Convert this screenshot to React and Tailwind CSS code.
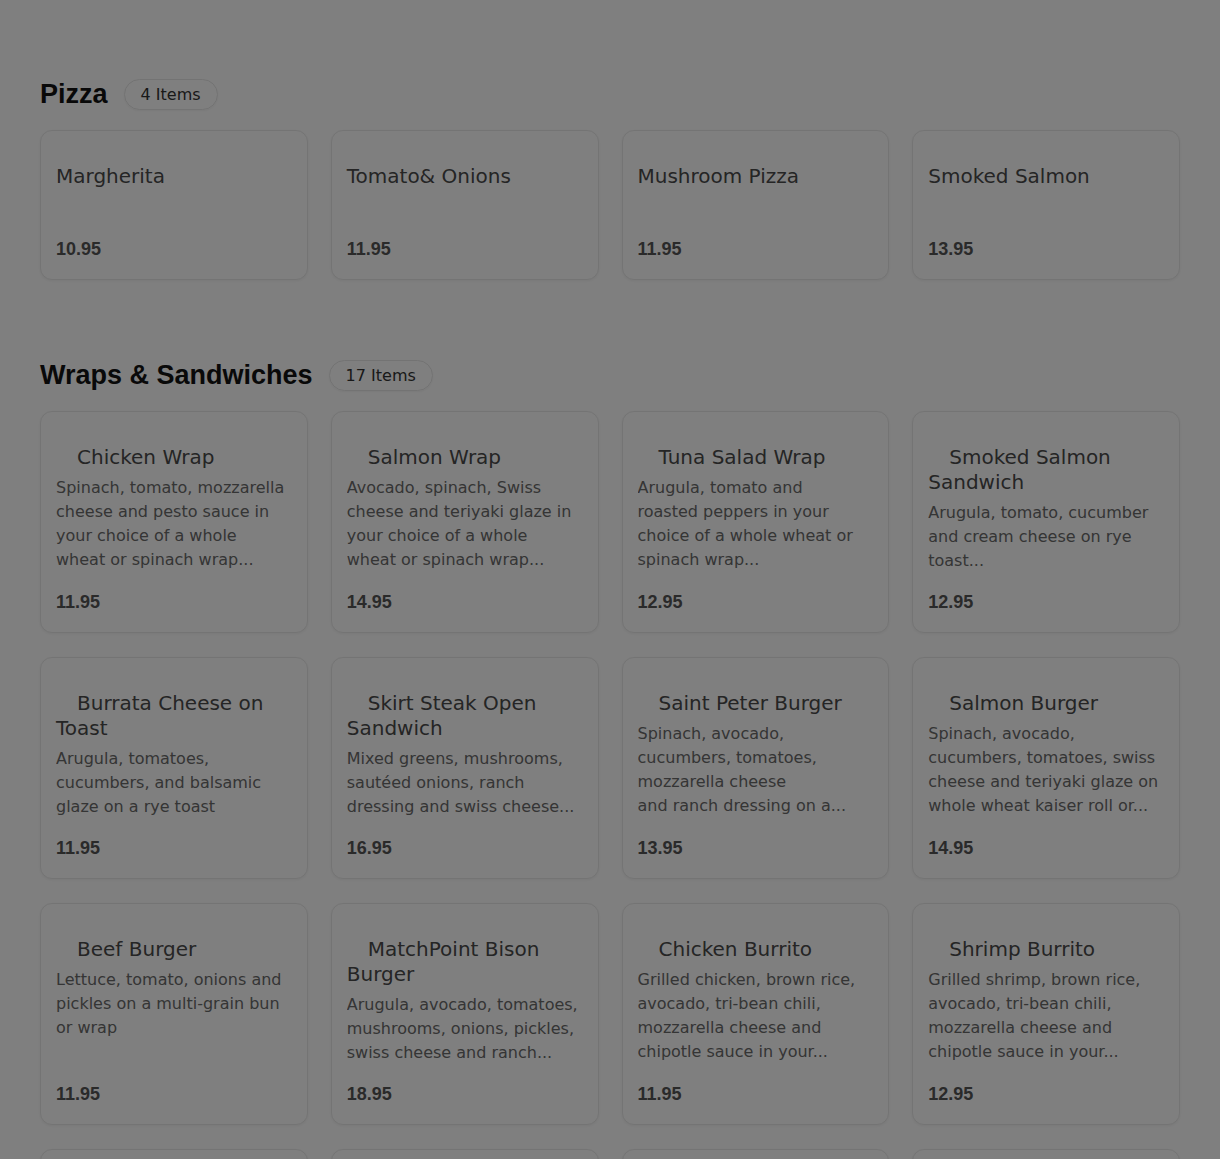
import React from 'react'

const pizzas = [
  { name: 'Margherita', price: '10.95' },
  { name: 'Tomato& Onions', price: '11.95' },
  { name: 'Mushroom Pizza', price: '11.95' },
  { name: 'Smoked Salmon', price: '13.95' },
]

const wraps = [
  { name: 'Chicken Wrap', desc: 'Spinach, tomato, mozzarella cheese and pesto sauce in your choice of a whole wheat or spinach wrap...', price: '11.95' },
  { name: 'Salmon Wrap', desc: 'Avocado, spinach, Swiss cheese and teriyaki glaze in your choice of a whole wheat or spinach wrap...', price: '14.95' },
  { name: 'Tuna Salad Wrap', desc: 'Arugula, tomato and\nroasted peppers in your choice of a whole wheat or spinach wrap...', price: '12.95' },
  { name: 'Smoked Salmon Sandwich', desc: 'Arugula, tomato, cucumber and cream cheese on rye toast...', price: '12.95' },
  { name: 'Burrata Cheese on Toast', desc: 'Arugula, tomatoes, cucumbers, and balsamic glaze on a rye toast', price: '11.95' },
  { name: 'Skirt Steak Open Sandwich', desc: 'Mixed greens, mushrooms, sautéed onions, ranch dressing and swiss cheese...', price: '16.95' },
  { name: 'Saint Peter Burger', desc: 'Spinach, avocado, cucumbers, tomatoes, mozzarella cheese\nand ranch dressing on a...', price: '13.95' },
  { name: 'Salmon Burger', desc: 'Spinach, avocado, cucumbers, tomatoes, swiss cheese and teriyaki glaze on whole wheat kaiser roll or...', price: '14.95' },
  { name: 'Beef Burger', desc: 'Lettuce, tomato, onions and pickles on a multi-grain bun or wrap', price: '11.95' },
  { name: 'MatchPoint Bison Burger', desc: 'Arugula, avocado, tomatoes, mushrooms, onions, pickles, swiss cheese and ranch...', price: '18.95' },
  { name: 'Chicken Burrito', desc: 'Grilled chicken, brown rice, avocado, tri-bean chili, mozzarella cheese and chipotle sauce in your...', price: '11.95' },
  { name: 'Shrimp Burrito', desc: 'Grilled shrimp, brown rice, avocado, tri-bean chili, mozzarella cheese and chipotle sauce in your...', price: '12.95' },
  { name: 'Veggie Burger', desc: 'Black bean patty, lettuce, tomato and avocado on a multi-grain bun', price: '12.95' },
  { name: 'Turkey Club', desc: 'Roasted turkey, bacon, lettuce, tomato and mayo on toasted bread', price: '13.95' },
  { name: 'Grilled Cheese', desc: 'Cheddar and mozzarella cheese on sourdough bread', price: '9.95' },
  { name: 'Falafel Wrap', desc: 'Falafel, hummus, cucumber, tomato and tahini sauce in a whole wheat wrap', price: '11.95' },
  { name: 'Caprese Sandwich', desc: 'Fresh mozzarella, tomato, basil and pesto on ciabatta', price: '12.95' },
]

const font = { fontFamily: '"DejaVu Sans", sans-serif' }

function Card({ item, withPic }) {
  return (
    <div className="flex flex-col min-h-[150px] rounded-xl border border-[#e9e9e9] bg-white pl-[15px] pr-4 py-4 shadow-[0_1px_3px_rgba(0,0,0,0.06)]">
      <h3 className="pt-[17px] text-[20px] leading-[25px] text-[#4a4a4a]">
        {withPic && <span className="inline-block w-[21px]" />}
        {item.name}
      </h3>
      {item.desc && (
        <p className="mt-1.5 line-clamp-4 whitespace-pre-line text-[16px] leading-6 text-[#6a6a6a]">{item.desc}</p>
      )}
      <div className="mt-auto pt-[15px] font-['Liberation_Sans',sans-serif] text-[18px] font-bold leading-7 text-[#555]">
        {item.price}
      </div>
    </div>
  )
}

function Section({ title, items, withPic }) {
  return (
    <section className="flex flex-col gap-5">
      <div className="flex h-[31px] items-center gap-4">
        <h2 className="font-['Liberation_Sans',sans-serif] text-[27px] font-bold text-[#121212]">{title}</h2>
        <span className="flex h-[31px] items-center rounded-full border border-[#e6e6e6] px-4 text-[16px] text-[#333] shadow-[0_1px_2px_rgba(0,0,0,0.05)]">
          {items.length} Items
        </span>
      </div>
      <div className="grid grid-cols-4 gap-x-[23px] gap-y-6">
        {items.map((it) => (
          <Card key={it.name} item={it} withPic={withPic} />
        ))}
      </div>
    </section>
  )
}

export default function App() {
  return (
    <div style={font} className="relative min-h-screen bg-white">
      <main className="flex flex-col gap-20 px-10 pt-[79px] pb-20">
        <Section title="Pizza" items={pizzas} />
        <Section title="Wraps & Sandwiches" items={wraps} withPic />
      </main>
      {/* modal backdrop */}
      <div className="fixed inset-0 bg-black/50" />
    </div>
  )
}
